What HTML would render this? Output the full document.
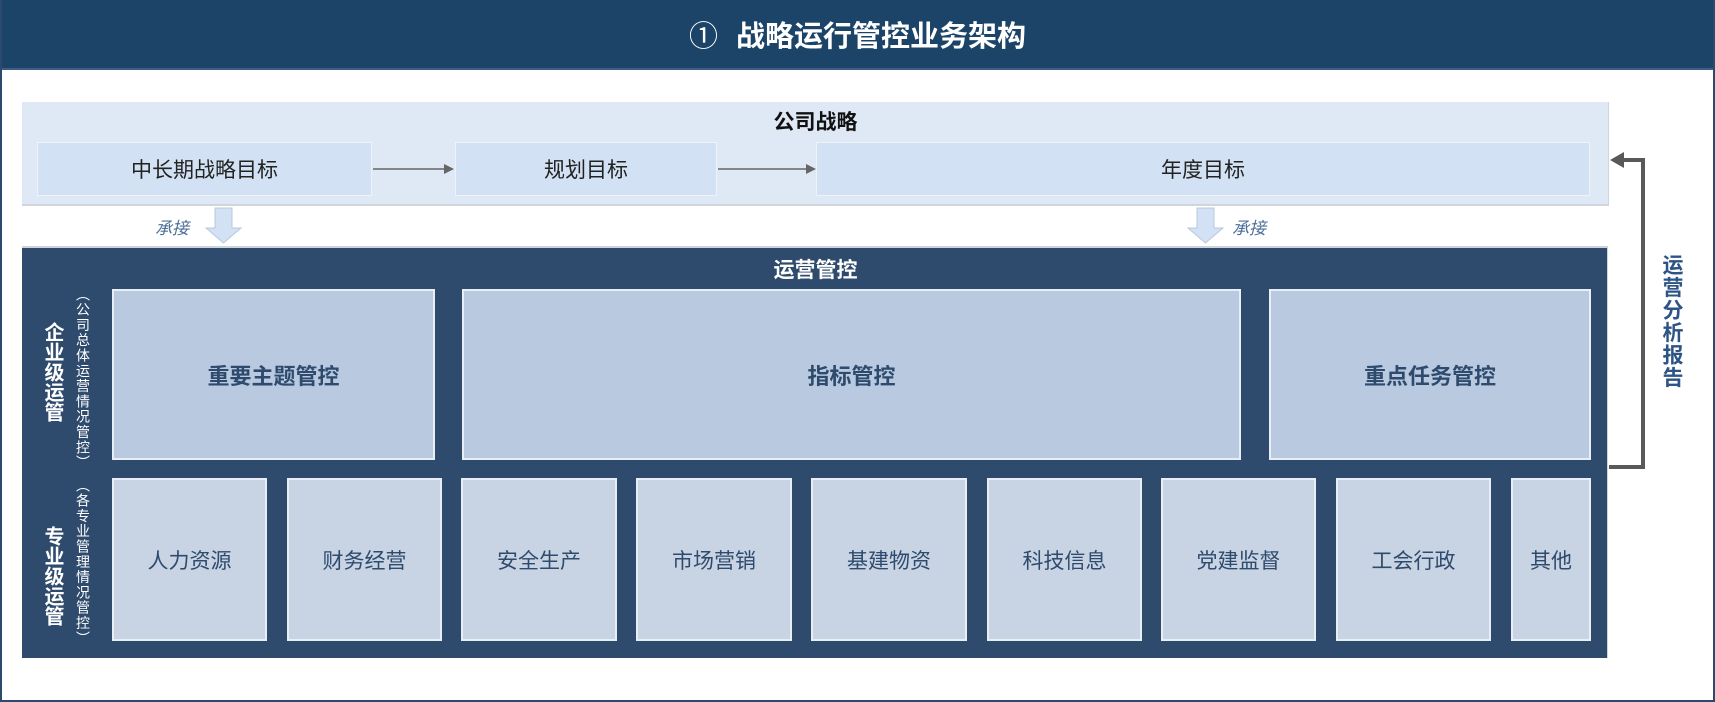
<!DOCTYPE html>
<html><head><meta charset="utf-8"><style>
*{margin:0;padding:0;box-sizing:border-box}
body{width:1715px;height:702px;background:#fff;position:relative;overflow:hidden;font-family:"Liberation Sans","Noto Sans CJK SC",sans-serif}
.a{position:absolute}
.c{display:flex;align-items:center;justify-content:center}
.frame{left:0;top:0;width:1715px;height:702px;border:2px solid #2b4a6e;border-top:none}
.title{left:0;top:0;width:1715px;height:70px;background:#1b4468;color:#fff;font-size:29px;font-weight:bold;border-bottom:2px solid #3e5f84}
.lp{left:22px;top:102px;width:1587px;height:104px;background:#dfe8f5;border-bottom:2px solid #d0d5db;border-right:1px solid #d0d5db}
.bx{background:#d2e1f3;border:1px solid #eef3fa;font-size:21px;color:#222;top:142px;height:54px}
.dp{left:22px;top:246px;width:1586px;height:412px;background:#2e4a6d;border-top:2px solid #cfd4da;border-right:1px solid #cfd4da}
.tb{background:#b8c9e0;border:2px solid #e8eef6;color:#2e4a6d;font-weight:bold;font-size:22px;top:289px;height:171px}
.bb{background:#c8d4e3;border:2px solid #e8eef6;color:#2e4a6d;font-size:21px;top:478px;height:163px}
.v{writing-mode:vertical-rl;text-orientation:upright}
.it{font-style:italic;color:#4f6f98;font-size:17px}
</style></head><body>
<div class="a title c"><span style="font-weight:normal;margin-right:18px">①</span>战略运行管控业务架构</div>
<div class="a frame"></div>
<div class="a lp"></div>
<div class="a c" style="left:22px;top:106px;width:1587px;height:30px;font-size:21px;font-weight:bold;color:#111">公司战略</div>
<div class="a bx c" style="left:37px;width:335px">中长期战略目标</div>
<div class="a bx c" style="left:455px;width:262px">规划目标</div>
<div class="a bx c" style="left:816px;width:774px">年度目标</div>
<svg class="a" style="left:0;top:0" width="1715" height="702">
<line x1="373" y1="169" x2="446" y2="169" stroke="#666" stroke-width="1.5"/><polygon points="454,169 444,164 444,174" fill="#666"/>
<line x1="718" y1="169" x2="808" y2="169" stroke="#666" stroke-width="1.5"/><polygon points="816,169 806,164 806,174" fill="#666"/>
<polygon points="215,208 232,208 232,228 241,228 223.5,243 206,228 215,228" fill="#d2e1f3" stroke="#b8c8dc"/>
<polygon points="1197,208 1214,208 1214,228 1223,228 1205.5,243 1188,228 1197,228" fill="#d2e1f3" stroke="#b8c8dc"/>
<polyline points="1609,467 1643,467 1643,160 1620,160" fill="none" stroke="#595959" stroke-width="4"/>
<polygon points="1610,160 1624,152 1624,168" fill="#595959"/>
</svg>
<div class="a it" style="left:155px;top:214px">承接</div>
<div class="a it" style="left:1232px;top:214px">承接</div>
<div class="a dp"></div>
<div class="a c" style="left:22px;top:255px;width:1587px;height:28px;color:#fff;font-weight:bold;font-size:21px">运营管控</div>
<div class="a v" style="left:41px;top:322px;font-size:20px;font-weight:bold;color:#fff;line-height:22px;letter-spacing:0">企业级运管</div>
<div class="a v" style="left:75px;top:287px;font-size:14px;color:#fff;line-height:16px;letter-spacing:1.3px">（公司总体运营情况管控）</div>
<div class="a v" style="left:41px;top:526px;font-size:20px;font-weight:bold;color:#fff;line-height:22px">专业级运管</div>
<div class="a v" style="left:75px;top:478px;font-size:14px;color:#fff;line-height:16px;letter-spacing:1.3px">（各专业管理情况管控）</div>
<div class="a tb c" style="left:112px;width:323px">重要主题管控</div>
<div class="a tb c" style="left:462px;width:779px">指标管控</div>
<div class="a tb c" style="left:1269px;width:322px">重点任务管控</div>
<div class="a bb c" style="left:112px;width:155px">人力资源</div>
<div class="a bb c" style="left:287px;width:155px">财务经营</div>
<div class="a bb c" style="left:461px;width:156px">安全生产</div>
<div class="a bb c" style="left:636px;width:156px">市场营销</div>
<div class="a bb c" style="left:811px;width:156px">基建物资</div>
<div class="a bb c" style="left:987px;width:155px">科技信息</div>
<div class="a bb c" style="left:1161px;width:155px">党建监督</div>
<div class="a bb c" style="left:1336px;width:155px">工会行政</div>
<div class="a bb c" style="left:1511px;width:80px">其他</div>
<div class="a v" style="left:1659px;top:254px;font-size:21px;font-weight:bold;color:#2e5385;line-height:24px;letter-spacing:1.5px">运营分析报告</div>
</body></html>
